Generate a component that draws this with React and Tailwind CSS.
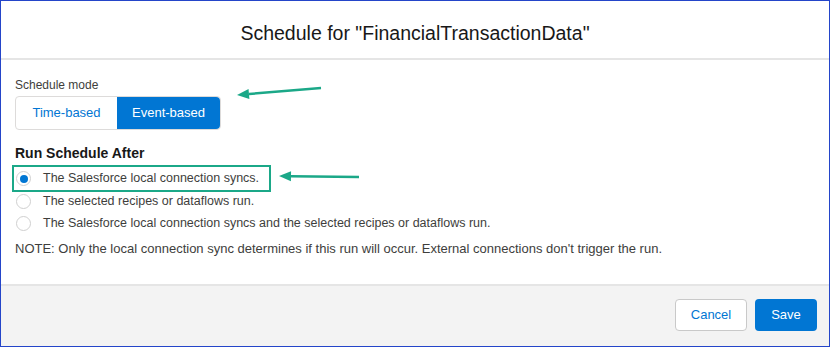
import React, { useState } from "react";

const options = [
  "The Salesforce local connection syncs.",
  "The selected recipes or dataflows run.",
  "The Salesforce local connection syncs and the selected recipes or dataflows run.",
];

function Arrow({ className, width, height, x1, y1, x2, y2 }) {
  // simple teal arrow pointing from (x1,y1) to (x2,y2)
  const ang = Math.atan2(y2 - y1, x2 - x1);
  const hl = 12;
  const hw = 5;
  const bx = x2 - Math.cos(ang) * hl;
  const by = y2 - Math.sin(ang) * hl;
  const px = -Math.sin(ang) * hw;
  const py = Math.cos(ang) * hw;
  return (
    <svg className={className} width={width} height={height}>
      <line x1={x1} y1={y1} x2={bx} y2={by} stroke="#1ba888" strokeWidth="2.5" />
      <polygon
        points={`${x2},${y2} ${bx + px},${by + py} ${bx - px},${by - py}`}
        fill="#1ba888"
      />
    </svg>
  );
}

const rowClass = [
  "-ml-[3px] w-[259px] h-[27px] flex items-center pl-[2px] border-2 border-[#1ba888]",
  "h-[19px] flex items-center pl-[1px]",
  "h-[24px] flex items-center pl-[1px]",
];

export default function App() {
  const [mode, setMode] = useState("event");
  const [after, setAfter] = useState(0);

  return (
    <div className="w-[830px] h-[347px] border border-[#2445c9] bg-white flex flex-col font-['Liberation_Sans',Arial,sans-serif] text-[#3e3e3c] overflow-hidden">
      {/* Header */}
      <div className="h-[59px] shrink-0 flex items-center justify-center border-b-2 border-[#e5e5e5]">
        <h1 className="text-[19.5px] text-[#181818] pt-[8px]">
          Schedule for "FinancialTransactionData"
        </h1>
      </div>

      {/* Body */}
      <div className="relative flex-1 px-[14px] pt-[17px]">
        <div className="text-[12px] leading-[16px]">Schedule mode</div>
        <div className="mt-[3px] flex w-[206px] h-[34px] rounded-[4px] border border-[#dddbda] text-[13px]">
          <button
            onClick={() => setMode("time")}
            className={
              mode === "time"
                ? "w-[101px] rounded-l-[4px] bg-[#0176d3] text-white"
                : "w-[101px] rounded-l-[4px] text-[#0176d3]"
            }
          >
            Time-based
          </button>
          <button
            onClick={() => setMode("event")}
            className={
              mode === "event"
                ? "flex-1 rounded-r-[4px] bg-[#0176d3] text-white"
                : "flex-1 rounded-r-[4px] text-[#0176d3]"
            }
          >
            Event-based
          </button>
        </div>

        <div className="mt-[14px] text-[14px] font-bold text-[#181818] leading-[18px]">
          Run Schedule After
        </div>

        <div className="mt-[3px] flex flex-col text-[12.5px]">
          {options.map((label, i) => (
            <label key={i} className={rowClass[i]}>
              <span
                onClick={() => setAfter(i)}
                className="w-[15px] h-[15px] rounded-full border border-[#d0d0d0] bg-white flex items-center justify-center"
              >
                {after === i && <span className="w-[8px] h-[8px] rounded-full bg-[#0176d3]" />}
              </span>
              <span className="ml-[12px]">{label}</span>
            </label>
          ))}
        </div>

        <p className="mt-[4px] text-[13px]">
          NOTE: Only the local connection sync determines if this run will occur. External connections don't trigger the run.
        </p>

        <Arrow
          className="absolute left-[230px] top-[23px]"
          width={100}
          height={20}
          x1={90}
          y1={5}
          x2={6}
          y2={12}
        />
        <Arrow
          className="absolute left-[272px] top-[108px]"
          width={90}
          height={20}
          x1={86}
          y1={9}
          x2={6}
          y2={8}
        />
      </div>

      {/* Footer */}
      <div className="h-[62px] shrink-0 bg-[#f3f3f3] border-t-2 border-[#e5e5e5] flex items-center justify-end gap-[8px] pr-[12px] pb-[2px]">
        <button className="w-[72px] h-[32px] rounded-[4px] border border-[#c9c9c9] bg-white text-[#0176d3] text-[13px]">
          Cancel
        </button>
        <button className="w-[62px] h-[32px] rounded-[4px] bg-[#0176d3] text-white text-[13px]">
          Save
        </button>
      </div>
    </div>
  );
}
